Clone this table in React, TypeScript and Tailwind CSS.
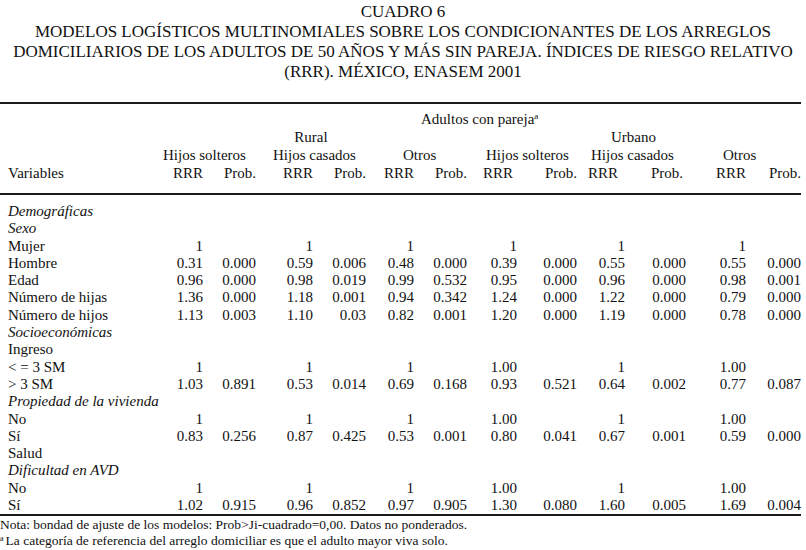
import React from "react";

// Column grid: label + 6 pairs of (RRR, Prob.)
const COLS = "grid grid-cols-[160px_43px_53px_57px_53px_48px_53px_50px_60px_48px_61px_60px_55px]";

type Row = { label: string; italic?: boolean; values?: string[] };

const ROWS: Row[] = [
  { label: "Demográficas", italic: true },
  { label: "Sexo", italic: true },
  { label: "Mujer", values: ["1", "", "1", "", "1", "", "1", "", "1", "", "1", ""] },
  { label: "Hombre", values: ["0.31", "0.000", "0.59", "0.006", "0.48", "0.000", "0.39", "0.000", "0.55", "0.000", "0.55", "0.000"] },
  { label: "Edad", values: ["0.96", "0.000", "0.98", "0.019", "0.99", "0.532", "0.95", "0.000", "0.96", "0.000", "0.98", "0.001"] },
  { label: "Número de hijas", values: ["1.36", "0.000", "1.18", "0.001", "0.94", "0.342", "1.24", "0.000", "1.22", "0.000", "0.79", "0.000"] },
  { label: "Número de hijos", values: ["1.13", "0.003", "1.10", "0.03", "0.82", "0.001", "1.20", "0.000", "1.19", "0.000", "0.78", "0.000"] },
  { label: "Socioeconómicas", italic: true },
  { label: "Ingreso" },
  { label: "< = 3 SM", values: ["1", "", "1", "", "1", "", "1.00", "", "1", "", "1.00", ""] },
  { label: "> 3 SM", values: ["1.03", "0.891", "0.53", "0.014", "0.69", "0.168", "0.93", "0.521", "0.64", "0.002", "0.77", "0.087"] },
  { label: "Propiedad de la vivienda", italic: true },
  { label: "No", values: ["1", "", "1", "", "1", "", "1.00", "", "1", "", "1.00", ""] },
  { label: "Sí", values: ["0.83", "0.256", "0.87", "0.425", "0.53", "0.001", "0.80", "0.041", "0.67", "0.001", "0.59", "0.000"] },
  { label: "Salud" },
  { label: "Dificultad en AVD", italic: true },
  { label: "No", values: ["1", "", "1", "", "1", "", "1.00", "", "1", "", "1.00", ""] },
  { label: "Sí", values: ["1.02", "0.915", "0.96", "0.852", "0.97", "0.905", "1.30", "0.080", "1.60", "0.005", "1.69", "0.004"] },
];

function Rule() {
  return <div className="h-[2px] w-[801px] bg-[#1a1a1a]" />;
}

export default function App() {
  return (
    <div className="w-[806px] h-[550px] bg-white text-[#111] font-['Liberation_Serif','Times_New_Roman',serif] overflow-hidden">
      {/* Title */}
      <div className="pt-[2px] text-center text-[17px] leading-[20px]">
        <div>CUADRO 6</div>
        <div>MODELOS LOGÍSTICOS MULTINOMIALES SOBRE LOS CONDICIONANTES DE LOS ARREGLOS</div>
        <div>DOMICILIARIOS DE LOS ADULTOS DE 50 AÑOS Y MÁS SIN PAREJA. ÍNDICES DE RIESGO RELATIVO</div>
        <div>(RRR). MÉXICO, ENASEM 2001</div>
      </div>

      <div className="mt-[20px]">
        <Rule />
      </div>

      {/* Header */}
      <div className="pt-[6px] pb-[11px] text-[15px] leading-[18px]">
        <div className={COLS}>
          <div className="col-start-2 col-span-12 pl-[261px]">
            Adultos con pareja<span className="relative -top-[5px] text-[9px] leading-none">a</span>
          </div>
        </div>
        <div className={COLS}>
          <div className="col-start-4 col-span-2 text-center">Rural</div>
          <div className="col-start-10 col-span-2 pl-[34px]">Urbano</div>
        </div>
        <div className={COLS}>
          <div className="col-start-2 col-span-2 pl-[3px]">Hijos solteros</div>
          <div className="col-span-2 pl-[17px]">Hijos casados</div>
          <div className="col-span-2 pl-[37px]">Otros</div>
          <div className="col-span-2 pl-[19px]">Hijos solteros</div>
          <div className="col-span-2 pl-[14px]">Hijos casados</div>
          <div className="col-span-2 pl-[37px]">Otros</div>
        </div>
        <div className={COLS}>
          <div className="pl-[8px]">Variables</div>
          <div className="text-right">RRR</div>
          <div className="text-right">Prob.</div>
          <div className="text-right">RRR</div>
          <div className="text-right">Prob.</div>
          <div className="text-right">RRR</div>
          <div className="text-right">Prob.</div>
          <div className="text-right pr-[4px]">RRR</div>
          <div className="text-right">Prob.</div>
          <div className="pl-[11px]">RRR</div>
          <div className="text-right pr-[3px]">Prob.</div>
          <div className="text-right">RRR</div>
          <div className="text-right">Prob.</div>
        </div>
      </div>

      <Rule />

      {/* Body */}
      <div className="pt-[8px] text-[15px] leading-[17.3px]">
        {ROWS.map((r, i) => (
          <div key={i} className={COLS}>
            <div className={`pl-[8px] whitespace-nowrap ${r.italic ? "italic" : ""}`}>{r.label}</div>
            {(r.values ?? Array(12).fill("")).map((v, j) => (
              <div key={j} className="text-right">
                {v}
              </div>
            ))}
          </div>
        ))}
      </div>

      <Rule />

      {/* Notes */}
      <div className="pt-[1px] text-[13.5px] leading-[16px]">
        <div>Nota: bondad de ajuste de los modelos: Prob&gt;Ji-cuadrado=0,00. Datos no ponderados.</div>
        <div>
          <span className="relative -top-[4px] text-[8px] leading-none mr-[2px]">a</span>La categoría de referencia del arreglo domiciliar es que el adulto mayor viva solo.
        </div>
      </div>
    </div>
  );
}
